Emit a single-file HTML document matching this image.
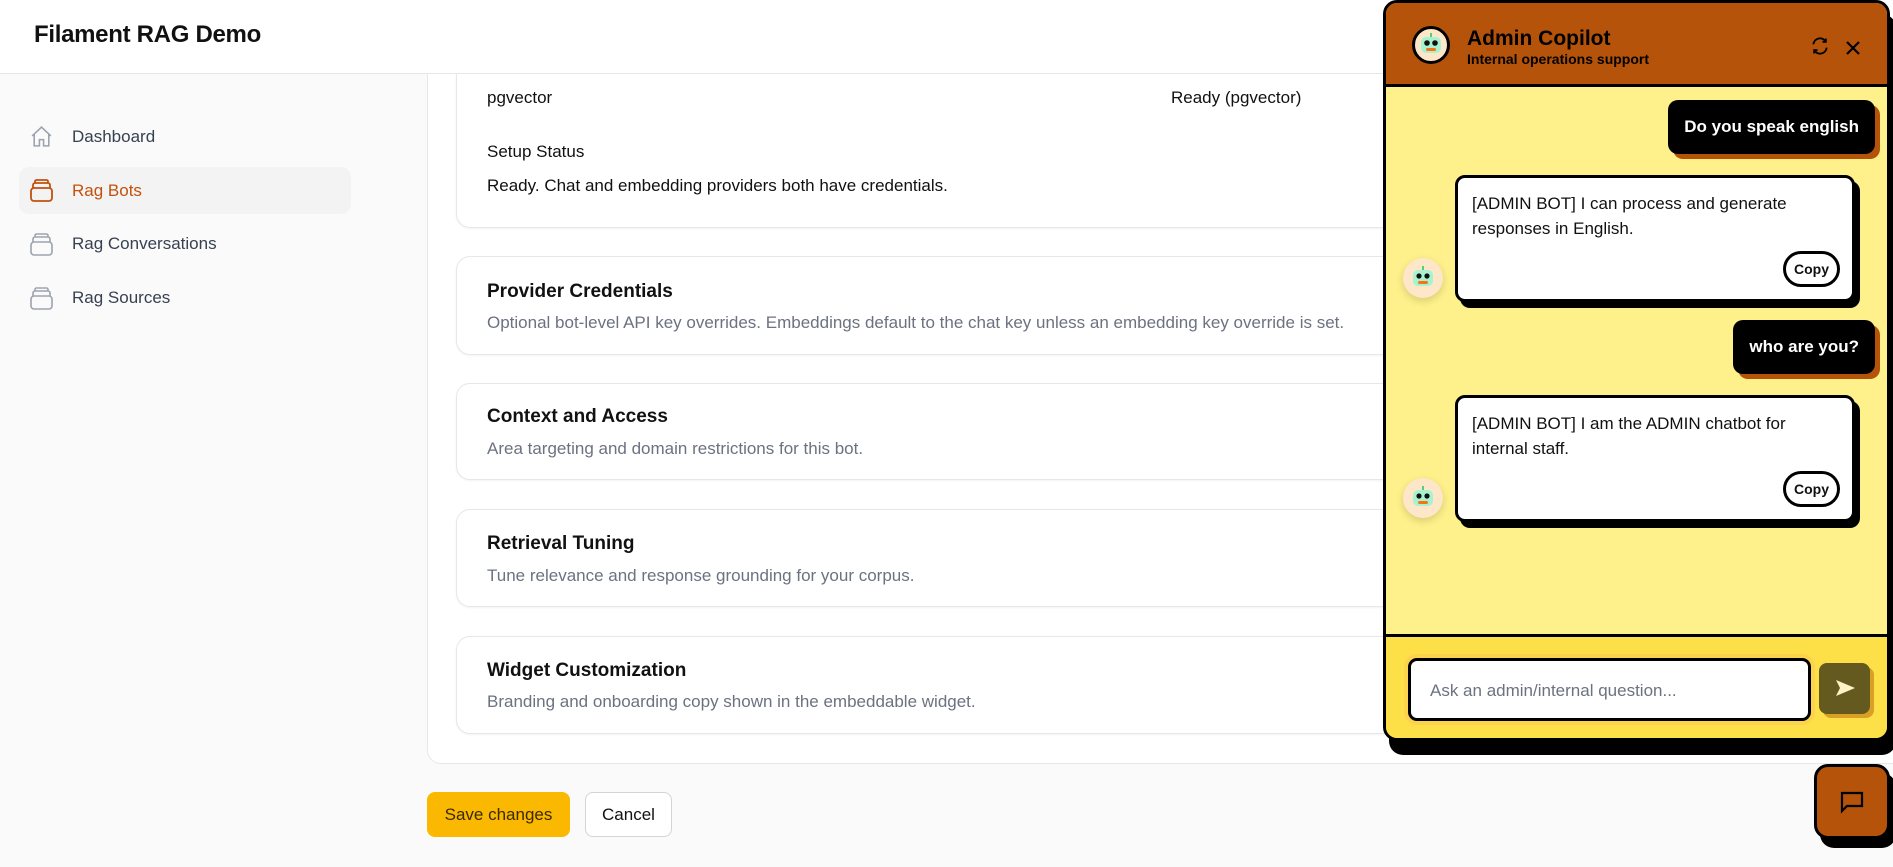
<!DOCTYPE html>
<html><head><meta charset="utf-8"><style>
*{box-sizing:border-box;margin:0;padding:0}
body{width:1893px;height:867px;overflow:hidden;background:#fafafa;font-family:"Liberation Sans",Arial,sans-serif;position:relative;color:#111}
.a{position:absolute}
.hdr{left:0;top:0;width:1893px;height:74px;background:#fff;border-bottom:1px solid #e5e7eb;z-index:5}
.hdr h1{position:absolute;left:34px;top:21px;font-size:24px;font-weight:700;letter-spacing:-0.3px}
.nav{font-size:17px;color:#374151}
.nav svg{position:absolute}
.outer{left:427px;top:40px;width:1500px;height:724px;background:#fff;border:1px solid #e5e7eb;border-radius:14px}
.card{left:456px;width:1500px;background:#fff;border:1px solid #e5e7eb;border-radius:14px;box-shadow:0 1px 2px rgba(0,0,0,.05)}
.t{font-size:19px;font-weight:700;color:#111;position:absolute;left:30px}
.d{font-size:17px;color:#6b7280;position:absolute;left:30px;white-space:nowrap}
.chat{left:1383px;top:0;width:507px;height:741px;border:3px solid #000;border-radius:14px;background:#fef08a;box-shadow:6px 14px 0 #000;overflow:hidden;z-index:10}
.ch{left:0;top:0;width:501px;height:84px;background:#b45309;border-bottom:3px solid #000}
.ub{background:#000;color:#fff;font-weight:700;font-size:17px;border-radius:10px;box-shadow:5px 5px 0 #b45309;padding:0 16px;display:flex;align-items:center;white-space:nowrap}
.bb{background:#fff;border:3px solid #000;border-radius:10px;box-shadow:5px 6px 0 #000;font-size:17px;line-height:25px;padding:13px 14px}
.copy{position:absolute;right:12px;bottom:12px;width:57px;height:36px;border:3px solid #000;border-radius:18px;font-size:14px;font-weight:700;display:flex;align-items:center;justify-content:center;background:#fff}
.av{width:40px;height:40px;border-radius:50%;background:#fde7c8;box-shadow:0 3px 8px rgba(0,0,0,.15)}
</style></head><body>
<div class="a hdr"><h1>Filament RAG Demo</h1></div>

<div class="a" style="left:19px;top:167px;width:332px;height:47px;background:#f3f3f3;border-radius:10px"></div>
<div class="nav">
<svg class="a" style="left:29px;top:124px" width="25" height="25" viewBox="0 0 24 24" fill="none" stroke="#9ca3af" stroke-width="1.5"><path d="M3 11.5 12 3l9 8.5M5 9.5V21h5v-6h4v6h5V9.5"/></svg>
<div class="a" style="left:72px;top:127px">Dashboard</div>
<svg class="a" style="left:29px;top:178px" width="26" height="25" viewBox="0 0 26 25" fill="none" stroke="#c2510c" stroke-width="1.8"><rect x="2" y="10" width="21" height="13" rx="3"/><path d="M4 10V7a2 2 0 0 1 2-2h13a2 2 0 0 1 2 2v3M6 5V3.5A1.5 1.5 0 0 1 7.5 2h10A1.5 1.5 0 0 1 19 3.5V5"/></svg>
<div class="a" style="left:72px;top:181px;color:#c2510c">Rag Bots</div>
<svg class="a" style="left:29px;top:232px" width="26" height="25" viewBox="0 0 26 25" fill="none" stroke="#9ca3af" stroke-width="1.6"><rect x="2" y="10" width="21" height="13" rx="3"/><path d="M4 10V7a2 2 0 0 1 2-2h13a2 2 0 0 1 2 2v3M6 5V3.5A1.5 1.5 0 0 1 7.5 2h10A1.5 1.5 0 0 1 19 3.5V5"/></svg>
<div class="a" style="left:72px;top:234px">Rag Conversations</div>
<svg class="a" style="left:29px;top:286px" width="26" height="25" viewBox="0 0 26 25" fill="none" stroke="#9ca3af" stroke-width="1.6"><rect x="2" y="10" width="21" height="13" rx="3"/><path d="M4 10V7a2 2 0 0 1 2-2h13a2 2 0 0 1 2 2v3M6 5V3.5A1.5 1.5 0 0 1 7.5 2h10A1.5 1.5 0 0 1 19 3.5V5"/></svg>
<div class="a" style="left:72px;top:288px">Rag Sources</div>
</div>

<div class="a outer"></div>
<div class="a card" style="top:40px;height:188px;border-top:none;border-radius:0 0 14px 14px">
  <div class="a" style="left:30px;top:48px;font-size:17px">pgvector</div>
  <div class="a" style="left:714px;top:48px;font-size:17px">Ready (pgvector)</div>
  <div class="a" style="left:30px;top:102px;font-size:17px;font-weight:500">Setup Status</div>
  <div class="a" style="left:30px;top:136px;font-size:17px">Ready. Chat and embedding providers both have credentials.</div>
</div>
<div class="a card" style="top:256px;height:99px"><div class="t" style="top:24px">Provider Credentials</div><div class="d" style="top:56px">Optional bot-level API key overrides. Embeddings default to the chat key unless an embedding key override is set.</div></div>
<div class="a card" style="top:383px;height:97px"><div class="t" style="top:22px">Context and Access</div><div class="d" style="top:55px">Area targeting and domain restrictions for this bot.</div></div>
<div class="a card" style="top:509px;height:98px"><div class="t" style="top:23px">Retrieval Tuning</div><div class="d" style="top:56px">Tune relevance and response grounding for your corpus.</div></div>
<div class="a card" style="top:636px;height:98px"><div class="t" style="top:23px">Widget Customization</div><div class="d" style="top:55px">Branding and onboarding copy shown in the embeddable widget.</div></div>

<div class="a" style="left:427px;top:792px;width:143px;height:45px;background:#fbb800;border-radius:8px;font-size:17px;color:#3a2a00;display:flex;align-items:center;justify-content:center">Save changes</div>
<div class="a" style="left:585px;top:792px;width:87px;height:45px;background:#fff;border:1px solid #d1d5db;border-radius:8px;font-size:17px;display:flex;align-items:center;justify-content:center">Cancel</div>

<div class="a chat">
  <div class="a ch">
    <div class="a" style="left:26px;top:23px;width:38px;height:38px;border-radius:50%;border:3px solid #000;background:#fde7c8"></div>
    <svg class="a" style="left:30px;top:26px" width="30" height="30" viewBox="0 0 30 30"><rect x="5" y="8" width="20" height="16" rx="5" fill="#a7f3d0"/><circle cx="11" cy="14" r="2.8" fill="#111"/><circle cx="19" cy="14" r="2.8" fill="#111"/><rect x="10" y="19" width="10" height="3" rx="1.5" fill="#f97316"/><line x1="15" y1="8" x2="15" y2="4" stroke="#22c55e" stroke-width="1.5"/></svg>
    <div class="a" style="left:81px;top:24px;font-size:21px;font-weight:700;color:#000">Admin Copilot</div>
    <div class="a" style="left:81px;top:48px;font-size:14px;font-weight:700;color:#000">Internal operations support</div>
    <svg class="a" style="left:424px;top:33px" width="20" height="20" viewBox="0 0 24 24" fill="none" stroke="#000" stroke-width="2.2"><path d="M4 10a8 8 0 0 1 15-3M20 14a8 8 0 0 1-15 3M19 3v4h-4M5 21v-4h4"/></svg>
    <svg class="a" style="left:460px;top:38px" width="14" height="14" viewBox="0 0 14 14" stroke="#000" stroke-width="2.2"><path d="M1 1l12 12M13 1 1 13"/></svg>
  </div>
  <div class="a ub" style="right:12px;top:97px;height:54px">Do you speak english</div>
  <div class="a bb" style="left:69px;top:172px;width:400px;height:127px">[ADMIN BOT] I can process and generate responses in English.<div class="copy">Copy</div></div>
  <div class="a av" style="left:17px;top:255px"></div>
  <svg class="a" style="left:22px;top:259px" width="30" height="30" viewBox="0 0 30 30"><rect x="5" y="8" width="20" height="16" rx="5" fill="#a7f3d0"/><circle cx="11" cy="14" r="2.6" fill="#111"/><circle cx="19" cy="14" r="2.6" fill="#111"/><rect x="10" y="19" width="10" height="3" rx="1.5" fill="#f97316"/><line x1="15" y1="8" x2="15" y2="4" stroke="#22c55e" stroke-width="1.5"/></svg>
  <div class="a ub" style="right:12px;top:317px;height:54px">who are you?</div>
  <div class="a bb" style="left:69px;top:392px;width:400px;height:127px">[ADMIN BOT] I am the ADMIN chatbot for internal staff.<div class="copy">Copy</div></div>
  <div class="a av" style="left:17px;top:475px"></div>
  <svg class="a" style="left:22px;top:479px" width="30" height="30" viewBox="0 0 30 30"><rect x="5" y="8" width="20" height="16" rx="5" fill="#a7f3d0"/><circle cx="11" cy="14" r="2.6" fill="#111"/><circle cx="19" cy="14" r="2.6" fill="#111"/><rect x="10" y="19" width="10" height="3" rx="1.5" fill="#f97316"/><line x1="15" y1="8" x2="15" y2="4" stroke="#22c55e" stroke-width="1.5"/></svg>
  <div class="a" style="left:0;top:631px;width:501px;height:110px;background:#fde047;border-top:3px solid #000"></div>
  <div class="a" style="left:22px;top:655px;width:403px;height:63px;background:#fff;border:3px solid #000;border-radius:9px;box-shadow:0 0 0 4px #fcd34d;font-size:17px;color:#6b7280;padding:20px 19px">Ask an admin/internal question...</div>
  <div class="a" style="left:433px;top:660px;width:51px;height:51px;background:#645a1f;border-radius:8px;box-shadow:4px 4px 0 #d9a026"></div>
  <svg class="a" style="left:450px;top:677px" width="19" height="16" viewBox="0 0 19 16"><path d="M0 0 19 8 0 16 4 8z" fill="#fef3c7"/></svg>
</div>

<div class="a" style="left:1814px;top:764px;width:76px;height:75px;background:#b45309;border:3px solid #000;border-radius:14px;box-shadow:6px 9px 0 #000"></div>
<svg class="a" style="left:1840px;top:790px" width="24" height="24" viewBox="0 0 24 24" fill="none" stroke="#000" stroke-width="2.2"><path d="M2 3h20v13H7l-5 5z"/></svg>
</body></html>
